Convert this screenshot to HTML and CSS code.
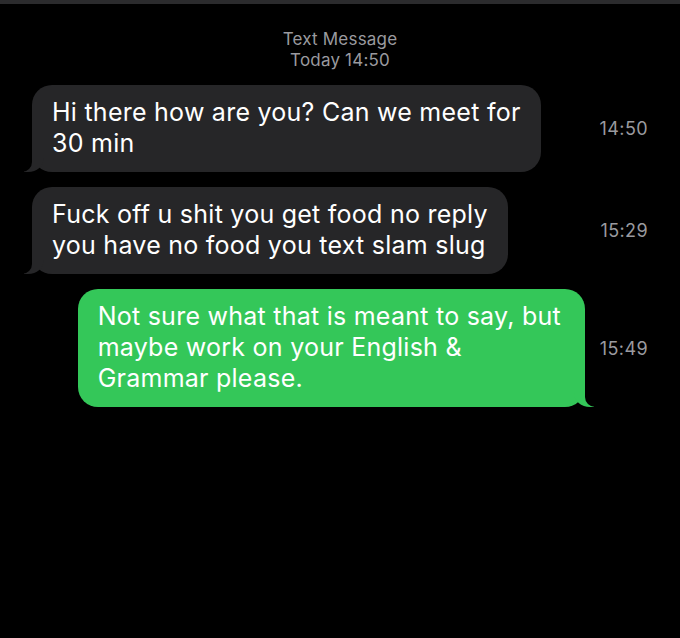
FILE: index.html
```html
<!DOCTYPE html>
<html lang="en">
<head>
<meta charset="utf-8">
<title>Messages</title>
<link rel="stylesheet" href="styles.css">
</head>
<body>
<div class="topbar"></div>
<main class="thread">
  <header class="meta">
    <div>Text Message</div>
    <div>Today 14:50</div>
  </header>
  <div class="row">
    <div class="bubble them">Hi there how are you? Can we meet for<br>30 min</div>
    <div class="time">14:50</div>
  </div>
  <div class="row">
    <div class="bubble them">Fuck off u shit you get food no reply<br>you have no food you text slam slug</div>
    <div class="time">15:29</div>
  </div>
  <div class="row">
    <div class="bubble me">Not sure what that is meant to say, but<br>maybe work on your English &amp;<br>Grammar please.</div>
    <div class="time">15:49</div>
  </div>
</main>
</body>
</html>
```
FILE: styles.css
```css
html, body {
  margin: 0;
  padding: 0;
  background: #000;
  height: 100%;
}
body {
  font-family: Inter, "Noto Sans", "Liberation Sans", sans-serif;
  color: #fff;
}
.topbar {
  height: 4px;
  background: #2b2b2d;
}
.thread {
  display: flex;
  flex-direction: column;
  gap: 15px;
}
.meta {
  margin-top: 25px;
  margin-bottom: -1px;
  text-align: center;
  font-size: 17px;
  line-height: 21px;
  letter-spacing: 0.2px;
  color: #9a9a9f;
}
.row {
  display: flex;
  align-items: center;
  padding: 0 32px;
}
.bubble {
  position: relative;
  font-size: 25px;
  line-height: 31px;
  letter-spacing: 0.25px;
  padding: 12px 20px 13px;
  border-radius: 20px;
  white-space: nowrap;
}
.them {
  background: #262628;
  margin-right: auto;
}
.me {
  background: #34c759;
  margin-left: auto;
  padding-right: 24px;
}
.them::before, .them::after, .me::before, .me::after {
  content: "";
  position: absolute;
  bottom: 0;
  height: 24px;
}
.them::before {
  left: -8px;
  width: 20px;
  background: #262628;
  border-bottom-right-radius: 16px 14px;
}
.them::after {
  left: -26px;
  width: 26px;
  background: #000;
  border-bottom-right-radius: 10px;
}
.me::before {
  right: -9px;
  width: 20px;
  background: #34c759;
  border-bottom-left-radius: 16px 14px;
}
.me::after {
  right: -26px;
  width: 26px;
  background: #000;
  border-bottom-left-radius: 10px;
}
.time {
  width: 63px;
  flex-shrink: 0;
  text-align: right;
  font-size: 18px;
  color: #9a9a9f;
  letter-spacing: 0.4px;
}
```
